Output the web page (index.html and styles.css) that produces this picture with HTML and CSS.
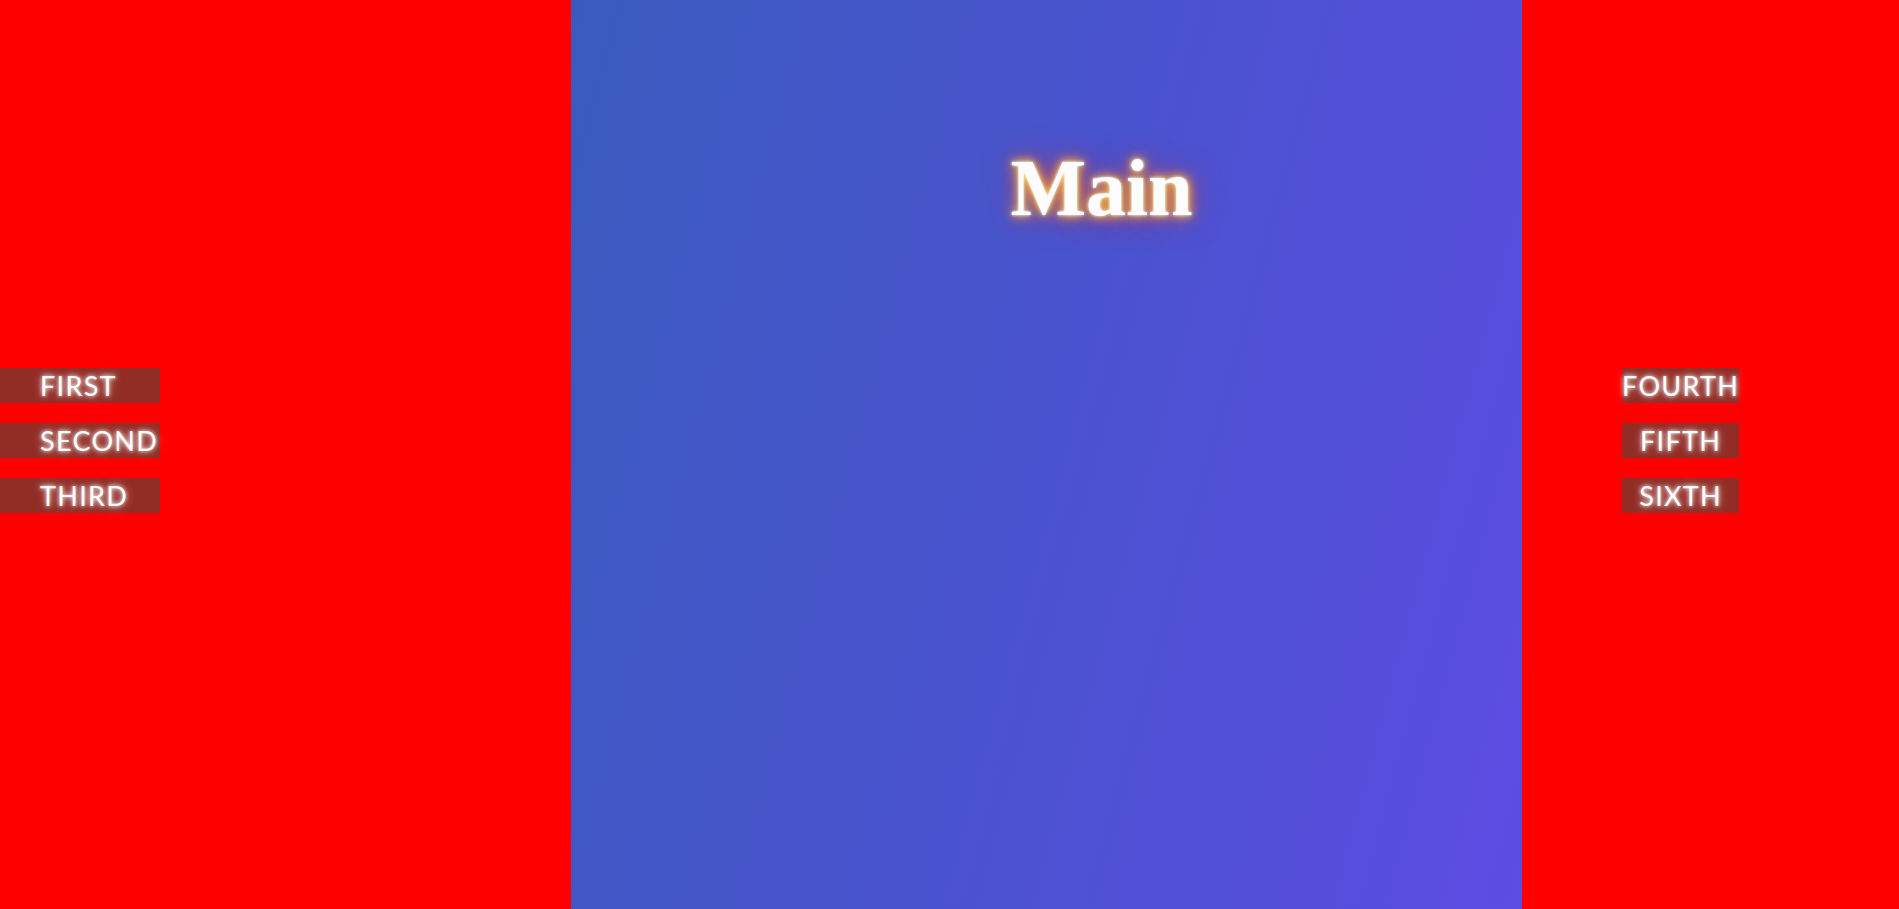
FILE: index.html
```html
<!DOCTYPE html>
<html lang="en">

<head>
    <title>Main</title>
    <meta charset="utf-8">
    <meta name="viewport" content="width=device-width, initial-scale=1">
    <link rel="stylesheet" href="styles.css">
</head>

<body>

    <div class="layout">

        <nav class="side side-left">
            <ul class="links">
                <li><a href="#">First</a></li>
                <li><a href="#">Second</a></li>
                <li><a href="#">Third</a></li>
            </ul>
        </nav>

        <main class="content">
            <h1>Main</h1>
        </main>

        <nav class="side side-right">
            <ul class="links links-center">
                <li><a href="#">Fourth</a></li>
                <li><a href="#">Fifth</a></li>
                <li><a href="#">Sixth</a></li>
            </ul>
        </nav>

    </div>

</body>

</html>
```

FILE: styles.css
```css
body {
    margin: 0;
    height: 909px;
    overflow: hidden;
}

.layout {
    display: flex;
    height: 100%;
}

.side {
    background-color: #ff0000;
    padding-top: 368px;
}

.side-left {
    width: 571px;
}

.side-right {
    flex: 1;
    padding-left: 100px;
}

.content {
    width: 951px;
    background: linear-gradient(105deg, #3a5bbe 0%, #4a53cf 50%, #5d4de3 100%);
    padding-left: 110px;
    box-sizing: border-box;
}

h1 {
    margin: 0;
    padding-top: 148px;
    font-family: "Liberation Serif", "Times New Roman", serif;
    font-size: 80px;
    font-weight: bold;
    line-height: 80px;
    text-align: center;
    color: #fdfdff;
    text-shadow: 0 0 3px #fff, 0 0 8px #ffd84d, 0 0 16px #ff8a1a, 0 0 32px rgba(205, 40, 85, 0.85);
}

.links {
    list-style: none;
    margin: 0;
    padding: 0;
    display: inline-flex;
    flex-direction: column;
    gap: 20px;
}

.links li {
    background-color: #922d26;
    height: 35px;
}

.links a {
    display: block;
    color: #fff;
    text-decoration: none;
    text-transform: uppercase;
    font-family: Lato, "Liberation Sans", sans-serif;
    font-size: 27px;
    letter-spacing: 1.3px;
    line-height: 35px;
    text-shadow: 0 0 4px #fff, 0 0 8px rgba(255, 255, 255, 0.6);
}

.side-left .links a {
    padding: 0 2px 0 40px;
}

.links-center a {
    text-align: center;
}
```
